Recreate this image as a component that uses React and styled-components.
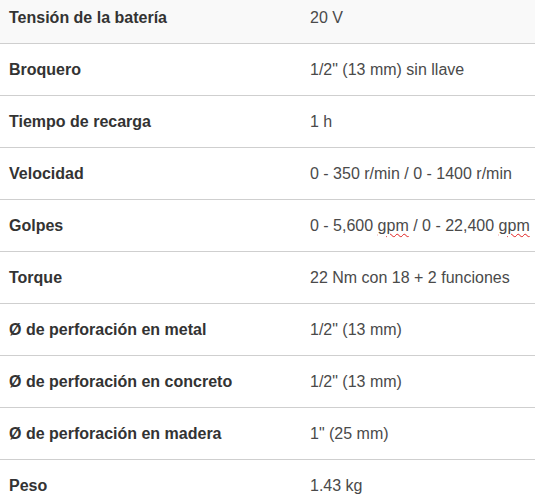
import styled, { createGlobalStyle } from "styled-components";

const Global = createGlobalStyle`
  html, body { margin: 0; padding: 0; background: #fff; overflow: hidden; }
  body { font-family: "Liberation Sans", Arial, sans-serif; }
`;

const specs = [
  ["Tensión de la batería", "20 V"],
  ["Broquero", "1/2\" (13 mm) sin llave"],
  ["Tiempo de recarga", "1 h"],
  ["Velocidad", "0 - 350 r/min / 0 - 1400 r/min"],
  ["Golpes", "gpm"],
  ["Torque", "22 Nm con 18 + 2 funciones"],
  ["Ø de perforación en metal", "1/2\" (13 mm)"],
  ["Ø de perforación en concreto", "1/2\" (13 mm)"],
  ["Ø de perforación en madera", "1\" (25 mm)"],
  ["Peso", "1.43 kg"],
];

const Table = styled.div`
  width: 535px;
  margin-top: -8px;
`;

const Row = styled.div`
  display: grid;
  grid-template-columns: 310px 1fr;
  align-items: center;
  height: 51px;
  border-bottom: 1px solid #cfcfcf;
  background: ${(p) => (p.$shade ? "#f9f9f9" : "#fff")};
  font-size: 16px;
`;

const Label = styled.div`
  padding-left: 9px;
  font-weight: bold;
  color: #333;
`;

const Value = styled.div`
  color: #4a4a4a;
  white-space: nowrap;
`;

const Typo = styled.span`
  text-decoration: underline wavy #e02020;
  text-decoration-thickness: 1px;
  text-underline-offset: 2px;
`;

export default function App() {
  return (
    <>
      <Global />
      <Table>
        {specs.map(([k, v], i) => (
          <Row key={k} $shade={i === 0}>
            <Label>{k}</Label>
            <Value>
              {v === "gpm" ? (
                <>
                  0 - 5,600 <Typo>gpm</Typo> / 0 - 22,400 <Typo>gpm</Typo>
                </>
              ) : (
                v
              )}
            </Value>
          </Row>
        ))}
      </Table>
    </>
  );
}
